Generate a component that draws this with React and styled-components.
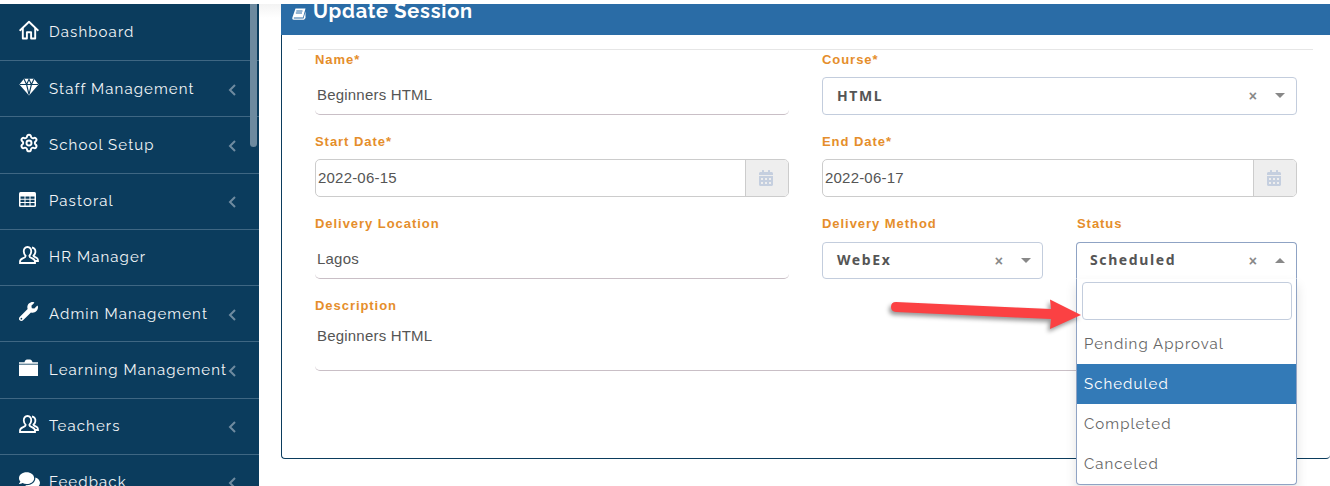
import React from 'react'
import styled, { createGlobalStyle } from 'styled-components'
import { FaWrench, FaComments, FaCalendarAlt } from 'react-icons/fa'
import { Settings } from 'lucide-react'

const HomeIcon = () => (
  <svg width="20" height="20" viewBox="0 0 20 20" fill="none" stroke="currentColor" strokeWidth="1.9" strokeLinejoin="round" strokeLinecap="round">
    <path d="M1.200 10.200 10 1.800l8.800 8.400" />
    <path d="M3.800 8.500V18.500h4.100v-6.200h4.200v6.200h4.100V8.500" />
  </svg>
)

const GemIcon = () => (
  <svg width="20" height="18" viewBox="0 0 20 18">
    <path d="M5 .8h10l4.600 5.600L10 17.600.4 6.400z" fill="currentColor" />
    <path d="M1 6.500h18M5 1l2.600 5.500L10 16.500 12.400 6.500 15 1M7.600 6.500 10 1.200l2.400 5.300" fill="none" stroke="#0b3c5d" strokeWidth="1.100" />
  </svg>
)

const TableIcon = () => (
  <svg width="17" height="15" viewBox="0 0 17 15">
    <rect width="17" height="15" rx="1.500" fill="currentColor" />
    <path d="M1.500 4.500h4v2.300h-4zM6.500 4.500h4v2.300h-4zM11.500 4.500h4v2.300h-4zM1.500 7.800h4v2.300h-4zM6.500 7.800h4v2.300h-4zM11.500 7.800h4v2.300h-4zM1.500 11.100h4v2.300h-4zM6.500 11.100h4v2.300h-4zM11.500 11.100h4v2.300h-4z" fill="#0b3c5d" />
  </svg>
)

const FolderIcon = () => (
  <svg width="19" height="17" viewBox="0 0 19 17">
    <path d="M0 3.200h5.500C6 1.500 6.800 .6 8 .6h3c1.200 0 2 .9 2.500 2.600H19v1.600H0z" fill="currentColor" />
    <rect y="5.600" width="19" height="11.400" fill="currentColor" />
  </svg>
)

const PeopleIcon = () => (
  <svg width="20" height="20" viewBox="0 0 20 20" fill="none" stroke="currentColor" strokeWidth="1.800">
    <path d="M13 2.500c2.600.4 3.800 2.600 3.300 5-.3 1.500-1 2.600-1.900 3.300.2 1 2.600 1.400 3.800 2.600.7.700.8 1.600.8 2.600h-3.500" />
    <path d="M8.500 2C6 2 4.600 4 4.800 6.600c.1 1.700.8 3.200 1.800 4.100.2 1.300-.6 1.800-2.400 2.500C2.500 13.900 1 14.600 1 16.500V18h15v-1.500c0-1.900-1.500-2.600-3.200-3.300-1.800-.7-2.600-1.200-2.400-2.500 1-.9 1.700-2.400 1.800-4.100C12.400 4 11 2 8.500 2z" />
  </svg>
)

const BookIcon = () => (
  <svg width="14" height="12" viewBox="0 0 14 12">
    <path d="M3.500.5h10L11 9.500H2.500C1.800 9.500 1.500 10 2 10.500h9.500l2-7v6.500L12 11.800H1.800C.6 11.800 0 10.800.4 9.500z" fill="currentColor" />
    <path d="M4.300 3h6.200M3.800 5h6.200" stroke="#2a6ca6" strokeWidth="1" />
  </svg>
)

const ChevronIcon = () => (
  <svg width="8" height="12" viewBox="0 0 8 12" fill="none" stroke="currentColor" strokeWidth="2">
    <path d="M7 1 2 6l5 5" />
  </svg>
)

const menu = [
  { label: 'Dashboard', icon: <HomeIcon /> },
  { label: 'Staff Management', icon: <GemIcon />, arrow: true },
  { label: 'School Setup', icon: <Settings size={20} strokeWidth={2.3} />, arrow: true },
  { label: 'Pastoral', icon: <TableIcon />, arrow: true },
  { label: 'HR Manager', icon: <PeopleIcon /> },
  { label: 'Admin Management', icon: <FaWrench size={19} />, arrow: true },
  { label: 'Learning Management', icon: <FolderIcon />, arrow: true },
  { label: 'Teachers', icon: <PeopleIcon />, arrow: true },
  { label: 'Feedback', icon: <FaComments size={21} />, arrow: true },
]

const statusOptions = ['Pending Approval', 'Scheduled', 'Completed', 'Canceled']

const Select = ({ value, open, compact }) => (
  <SelectBox $open={open} $compact={compact}>
    <SelectValue>{value}</SelectValue>
    <ClearMark>×</ClearMark>
    <Caret $open={open} />
  </SelectBox>
)

const DateInput = ({ value }) => (
  <DateGroup>
    <DateValue>{value}</DateValue>
    <DateAddon>
      <FaCalendarAlt size={16} />
    </DateAddon>
  </DateGroup>
)

export default function App() {
  return (
    <>
      <GlobalStyle />
      <Page>
        <Sidebar>
          {menu.map(item => (
            <MenuItem key={item.label}>
              <MenuIcon>{item.icon}</MenuIcon>
              <MenuLabel>{item.label}</MenuLabel>
              {item.arrow && (
                <MenuArrow>
                  <ChevronIcon />
                </MenuArrow>
              )}
            </MenuItem>
          ))}
          <ScrollThumb />
        </Sidebar>
        <Main>
          <Card>
            <CardHeader>
              <HeaderIcon>
                <BookIcon />
              </HeaderIcon>
              <CardTitle>Update Session</CardTitle>
            </CardHeader>
            <CardBody>
              <Divider />
              <Form>
                <Field>
                  <Label>Name*</Label>
                  <UnderlineInput>Beginners HTML</UnderlineInput>
                </Field>
                <Field>
                  <Label>Course*</Label>
                  <Select value="HTML" />
                </Field>
                <Field>
                  <Label>Start Date*</Label>
                  <DateInput value="2022-06-15" />
                </Field>
                <Field>
                  <Label>End Date*</Label>
                  <DateInput value="2022-06-17" />
                </Field>
                <Field>
                  <Label>Delivery Location</Label>
                  <UnderlineInput>Lagos</UnderlineInput>
                </Field>
                <SplitField>
                  <Field>
                    <Label>Delivery Method</Label>
                    <Select value="WebEx" compact />
                  </Field>
                  <StatusField>
                    <Label>Status</Label>
                    <Select value="Scheduled" open compact />
                    <Dropdown>
                      <SearchWrap>
                        <SearchBox />
                      </SearchWrap>
                      {statusOptions.map(option => (
                        <Option key={option} $active={option === 'Scheduled'}>
                          {option}
                        </Option>
                      ))}
                    </Dropdown>
                  </StatusField>
                </SplitField>
                <WideField>
                  <Label>Description</Label>
                  <TextArea>Beginners HTML</TextArea>
                </WideField>
              </Form>
            </CardBody>
          </Card>
        </Main>
        <Arrow width="200" height="44" viewBox="0 0 200 44">
          <path d="M11 12 L166 19 L165 9.500 L196 25 L165 39 L166 29 L11 22 Q6 21.500 6 17 Q6 12 11 12 Z" fill="#fb4143" />
        </Arrow>
      </Page>
    </>
  )
}

const GlobalStyle = createGlobalStyle`
  html, body {
    margin: 0;
    height: 486px;
    overflow: hidden;
    background: #fff;
  }
  * {
    box-sizing: border-box;
  }
`

const Page = styled.div`
  position: relative;
  display: flex;
  width: 1330px;
  height: 486px;
  overflow: hidden;
  padding-top: 4px;
`

const Sidebar = styled.nav`
  position: relative;
  flex: 0 0 259px;
  height: 482px;
  padding-top: 0.75px;
  overflow: hidden;
  background: #0b3c5d;
  font-family: Raleway, Lato, 'Noto Sans', sans-serif;
`

const MenuItem = styled.div`
  display: flex;
  align-items: center;
  height: 56.25px;
  padding-left: 19px;
  border-bottom: 1px solid #3f6783;
  color: #f2f5f7;
`

const MenuIcon = styled.span`
  display: flex;
  align-items: center;
  justify-content: flex-start;
  flex: 0 0 30px;
  margin-top: -4px;
  color: #fff;
`

const MenuLabel = styled.span`
  margin-top: 0;
  font-size: 15px;
  letter-spacing: 1.1px;
  white-space: nowrap;
`

const MenuArrow = styled.span`
  position: absolute;
  left: 228px;
  display: flex;
  margin-top: 2px;
  color: #6f8ba0;
`

const ScrollThumb = styled.div`
  position: absolute;
  top: 0;
  left: 250px;
  width: 7px;
  height: 143px;
  border-radius: 0 0 4px 4px;
  background: #6d8a9f;
`

const Main = styled.main`
  flex: 1;
  min-width: 0;
  padding-left: 22px;
  background: linear-gradient(180deg, #f3f3f3 0, #fff 14px);
`

const Card = styled.section`
  width: 1049px;
  height: 455px;
  border-left: 1px solid #0b3c5d;
  border-bottom: 1px solid #0b3c5d;
  border-radius: 0 0 4px 4px;
  background: #fff;
`

const CardHeader = styled.header`
  display: flex;
  align-items: flex-start;
  height: 31px;
  margin-left: -1px;
  padding-left: 11px;
  overflow: hidden;
  background: #2a6ca6;
  color: #fff;
`

const HeaderIcon = styled.span`
  display: flex;
  margin-top: 4px;
  margin-right: 7px;
`

const CardTitle = styled.h2`
  margin: -5px 0 0;
  font-family: Raleway, Lato, 'Noto Sans', sans-serif;
  font-size: 20px;
  line-height: 24px;
  font-weight: 700;
  letter-spacing: 0.75px;
`

const CardBody = styled.div`
  padding: 14px 17px 0 16px;
`

const Divider = styled.hr`
  margin: 0;
  border: 0;
  border-top: 1px solid #e6e6e6;
`

const Form = styled.div`
  display: grid;
  grid-template-columns: 474px 475px;
  column-gap: 33px;
  row-gap: 17px;
  padding-left: 17px;
  font-family: 'Liberation Sans', Arial, sans-serif;
`

const Field = styled.div`
  display: flex;
  flex-direction: column;
  min-width: 0;
`

const WideField = styled(Field)`
  grid-column: 1 / -1;
`

const SplitField = styled.div`
  display: grid;
  grid-template-columns: 221px 220px;
  column-gap: 34px;
`

const StatusField = styled(Field)`
  position: relative;
`

const Label = styled.label`
  height: 27px;
  padding-top: 3px;
  color: #e58e2b;
  font-size: 13px;
  line-height: 14px;
  font-weight: 700;
  letter-spacing: 0.95px;
`

const UnderlineInput = styled.div`
  display: flex;
  align-items: center;
  height: 38px;
  padding: 0 2px 2px;
  border-bottom: 1px solid #c9bfc6;
  border-radius: 0 0 5px 5px;
  color: #555;
  font-size: 15px;
  letter-spacing: 0.2px;
`

const TextArea = styled(UnderlineInput)`
  align-items: flex-start;
  height: 51px;
  margin-top: -3px;
  padding-top: 7px;
`

const SelectBox = styled.div`
  display: flex;
  align-items: center;
  height: ${props => (props.$compact ? '37px' : '38px')};
  margin-top: ${props => (props.$compact ? '1px' : '0')};
  margin-left: ${props => (props.$open ? '-1px' : '0')};
  padding: 0 11px 2px ${props => (props.$open ? '13px' : '14px')};
  border: 1px solid ${props => (props.$open ? '#8fa3c4' : '#c3cddd')};
  border-bottom-color: ${props => (props.$open ? 'transparent' : '#c3cddd')};
  border-radius: ${props => (props.$open ? '4px 4px 0 0' : '4px')};
  background: #fff;
`

const SelectValue = styled.span`
  flex: 1;
  color: #555;
  font-family: 'Noto Sans', sans-serif;
  font-size: 14px;
  font-weight: 700;
  letter-spacing: 1.6px;
`

const ClearMark = styled.span`
  margin-top: 2px;
  margin-right: 18px;
  color: #888;
  font-family: 'Liberation Sans', sans-serif;
  font-size: 14px;
  font-weight: 700;
`

const Caret = styled.span`
  width: 0;
  height: 0;
  margin-top: 1px;
  border-left: 5px solid transparent;
  border-right: 5px solid transparent;
  border-top: ${props => (props.$open ? '0' : '5px solid #888')};
  border-bottom: ${props => (props.$open ? '5px solid #888' : '0')};
`

const DateGroup = styled.div`
  display: flex;
  height: 38px;
  border: 1px solid #ccc;
  border-radius: 5px;
  overflow: hidden;
`

const DateValue = styled.div`
  display: flex;
  flex: 1;
  align-items: center;
  padding: 0 0 2px 2px;
  color: #555;
  font-size: 15px;
  letter-spacing: 0.2px;
`

const DateAddon = styled.div`
  display: flex;
  flex: 0 0 43px;
  align-items: center;
  justify-content: center;
  padding-right: 2px;
  border-left: 1px solid #ccc;
  background: #eee;
  color: #c5cfdf;
`

const Dropdown = styled.div`
  position: absolute;
  top: 65px;
  left: -1px;
  right: 0;
  z-index: 2;
  height: 206px;
  border: 1px solid #8fa3c4;
  border-top: 0;
  border-radius: 0 0 4px 4px;
  background: #fff;
  box-shadow: 0 6px 12px rgba(0, 0, 0, 0.12);
  font-family: Raleway, Lato, 'Noto Sans', sans-serif;
`

const SearchWrap = styled.div`
  padding: 3px 4px 4px 5px;
`

const SearchBox = styled.div`
  height: 38px;
  border: 1px solid #c3cddd;
  border-radius: 4px;
`

const Option = styled.div`
  display: flex;
  align-items: center;
  height: 40px;
  padding: 0 0 1px 7px;
  background: ${props => (props.$active ? '#337ab7' : 'transparent')};
  color: ${props => (props.$active ? '#fff' : '#666')};
  font-size: 15px;
  letter-spacing: 1.05px;
`

const Arrow = styled.svg`
  position: absolute;
  top: 290px;
  left: 885px;
  z-index: 3;
  filter: drop-shadow(-2px 3px 2px rgba(0, 0, 0, 0.4));
`
